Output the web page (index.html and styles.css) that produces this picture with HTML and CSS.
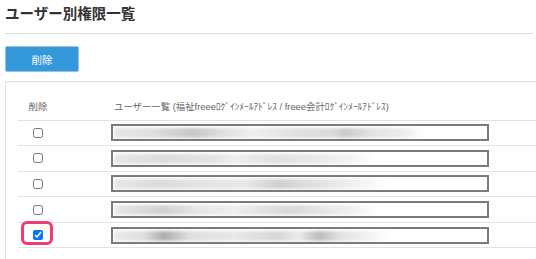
FILE: index.html
```html
<!DOCTYPE html>
<html lang="ja">
<head>
	<meta charset="UTF-8">
	<title>ユーザー別権限一覧</title>
	<link rel="stylesheet" href="styles.css">
</head>
<body>
	<h1 class="title">ユーザー別権限一覧</h1>
	<button type="button" class="btn-delete">削除</button>
	<div class="panel">
		<table class="user-table">
			<thead>
				<tr>
					<th class="col-check">削除</th>
					<th class="col-user">ユーザー一覧 (福祉freeeﾛｸﾞｲﾝﾒｰﾙｱﾄﾞﾚｽ / freee会計ﾛｸﾞｲﾝﾒｰﾙｱﾄﾞﾚｽ)</th>
				</tr>
			</thead>
			<tbody>
				<tr>
					<td class="col-check"><input type="checkbox"></td>
					<td class="col-user"><div class="field"><div class="blur blur1"></div></div></td>
				</tr>
				<tr>
					<td class="col-check"><input type="checkbox"></td>
					<td class="col-user"><div class="field"><div class="blur blur2"></div></div></td>
				</tr>
				<tr>
					<td class="col-check"><input type="checkbox"></td>
					<td class="col-user"><div class="field"><div class="blur blur3"></div></div></td>
				</tr>
				<tr>
					<td class="col-check"><input type="checkbox"></td>
					<td class="col-user"><div class="field"><div class="blur blur4"></div></div></td>
				</tr>
				<tr>
					<td class="col-check"><span class="mark"></span><input type="checkbox" checked></td>
					<td class="col-user"><div class="field"><div class="blur blur5"></div></div></td>
				</tr>
			</tbody>
		</table>
	</div>
</body>
</html>
```

FILE: styles.css
```css
*{
	margin: 0;
	padding: 0;
	box-sizing: border-box;
}
body{
	background: #fff;
	padding: 3px 0 0 5px;
	font-family: "Liberation Sans", "Noto Sans CJK JP", sans-serif;
	color: #333;
	overflow: hidden;
}
.title{
	font-size: 14.5px;
	line-height: 22px;
	font-weight: bold;
	color: #333;
	padding-bottom: 8px;
	border-bottom: 1px solid #ddd;
	margin-right: 3px;
}
.btn-delete{
	display: block;
	margin-top: 12px;
	width: 74px;
	height: 26px;
	background: #3498db;
	border: 1px solid #8fc3e8;
	border-radius: 2px;
	color: #fff;
	font-size: 10.5px;
	font-family: "Liberation Sans", "Noto Sans CJK JP", sans-serif;
}
.panel{
	margin-top: 9px;
	border: 1px solid #ddd;
	border-right: none;
	border-bottom: none;
	border-radius: 3px 0 0 0;
	padding: 10px 0 20px 12px;
}
.user-table{
	width: 100%;
	border-collapse: collapse;
}
.user-table th{
	height: 28px;
	font-size: 9.4px;
	font-weight: normal;
	color: #666;
	text-align: left;
	border-bottom: 1px solid #e2e2e2;
}
.user-table td{
	height: 25.6px;
	border-bottom: 1px solid #e2e2e2;
	vertical-align: middle;
}
.user-table .col-check{
	width: 40px;
	text-align: center;
	position: relative;
}
.user-table th.col-user{
	padding-left: 56px;
}
.user-table td.col-user{
	padding-left: 53px;
}
.col-check input{
	display: block;
	width: 10px;
	height: 10px;
	margin: 0 auto;
}
.mark{
	position: absolute;
	left: 3px;
	top: -2px;
	width: 32px;
	height: 24px;
	border: 3px solid #f23a6e;
	border-radius: 6px;
}
.field{
	width: 378px;
	height: 17px;
	border: 2px solid #7b7b7b;
	padding: 2px 0 0 1px;
	overflow: hidden;
}
.blur{
	height: 10px;
	filter: blur(1.5px);
}
.blur1{
	width: 310px;
	background: linear-gradient(to right, #e6e6e6 0, #dedede 40px, #c6c6c6 80px, #e0e0e0 110px, #eeeeee 140px, #e0e0e0 180px, #dadada 220px, #cacaca 230px, #e4e4e4 260px, #ececec 290px, rgba(255,255,255,0) 310px);
}
.blur2{
	width: 262px;
	background: linear-gradient(to right, #e6e6e6 0, #dcdcdc 50px, #e4e4e4 100px, #eeeeee 120px, #e0e0e0 160px, #e8e8e8 200px, #f2f2f2 235px, rgba(255,255,255,0) 262px);
}
.blur3{
	width: 275px;
	background: linear-gradient(to right, #e8e8e8 0, #dadada 45px, #e2e2e2 75px, #e8e8e8 130px, #d0d0d0 165px, #dcdcdc 190px, #e6e6e6 215px, #f2f2f2 245px, rgba(255,255,255,0) 275px);
}
.blur4{
	width: 265px;
	background: linear-gradient(to right, #e8e8e8 0, #d0d0d0 50px, #e4e4e4 80px, #eeeeee 120px, #d8d8d8 175px, #e2e2e2 200px, #efefef 235px, rgba(255,255,255,0) 265px);
}
.blur5{
	width: 275px;
	background: linear-gradient(to right, #eaeaea 0, #dedede 30px, #adadad 50px, #dedede 75px, #e8e8e8 120px, #d6d6d6 165px, #eaeaea 185px, #bcbcbc 205px, #e0e0e0 225px, #efefef 250px, rgba(255,255,255,0) 275px);
}
```
